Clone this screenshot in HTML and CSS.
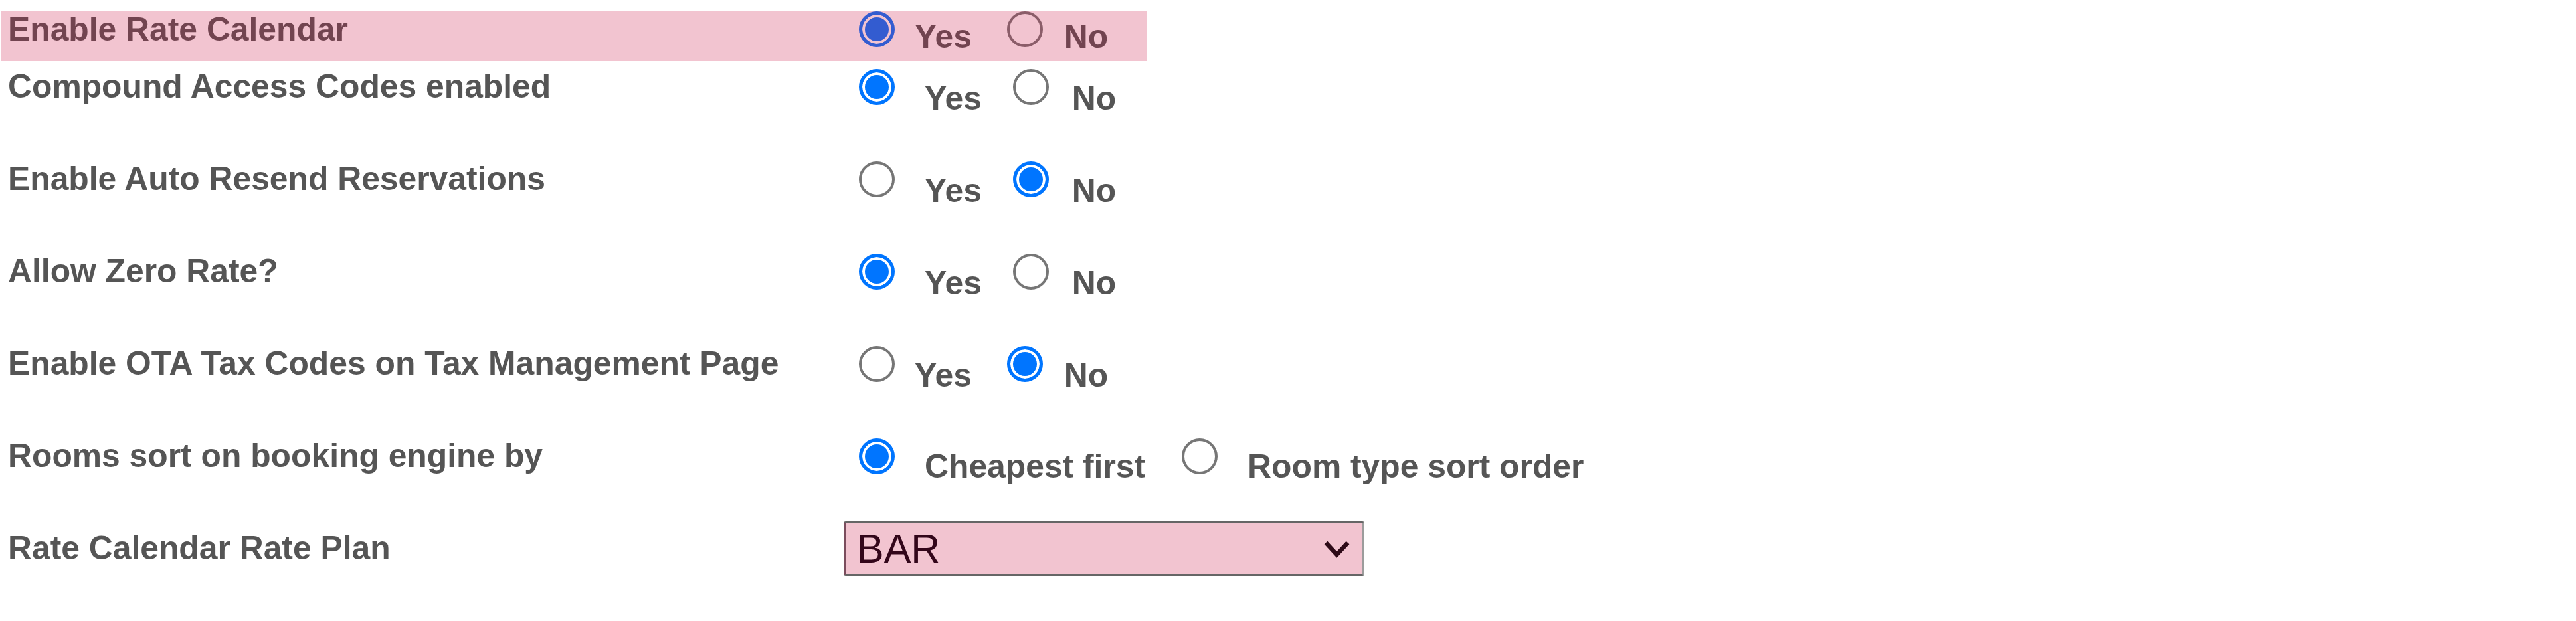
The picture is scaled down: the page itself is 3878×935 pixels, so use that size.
FILE: index.html
```html
<!DOCTYPE html>
<html lang="en">
<head>
<meta charset="utf-8">
<title>Settings</title>
<link rel="stylesheet" href="styles.css">
</head>
<body>
<div class="form">
  <div class="row row-first hl">
    <div class="label">Enable Rate Calendar</div>
    <div class="opts tight">
      <input type="radio" name="rc" class="radio" checked><span class="opt opt-a">Yes</span>
      <input type="radio" name="rc" class="radio radio-b"><span class="opt opt-b">No</span>
    </div>
  </div>
  <div class="row">
    <div class="label">Compound Access Codes enabled</div>
    <div class="opts">
      <input type="radio" name="cac" class="radio" checked><span class="opt opt-a">Yes</span>
      <input type="radio" name="cac" class="radio radio-b"><span class="opt opt-b">No</span>
    </div>
  </div>
  <div class="row">
    <div class="label">Enable Auto Resend Reservations</div>
    <div class="opts">
      <input type="radio" name="ars" class="radio"><span class="opt opt-a">Yes</span>
      <input type="radio" name="ars" class="radio radio-b" checked><span class="opt opt-b">No</span>
    </div>
  </div>
  <div class="row">
    <div class="label">Allow Zero Rate?</div>
    <div class="opts">
      <input type="radio" name="azr" class="radio" checked><span class="opt opt-a">Yes</span>
      <input type="radio" name="azr" class="radio radio-b"><span class="opt opt-b">No</span>
    </div>
  </div>
  <div class="row">
    <div class="label">Enable OTA Tax Codes on Tax Management Page</div>
    <div class="opts tight">
      <input type="radio" name="ota" class="radio"><span class="opt opt-a">Yes</span>
      <input type="radio" name="ota" class="radio radio-b" checked><span class="opt opt-b">No</span>
    </div>
  </div>
  <div class="row row-sort">
    <div class="label">Rooms sort on booking engine by</div>
    <div class="opts sort">
      <input type="radio" name="sort" class="radio" checked><span class="opt opt-a">Cheapest first</span>
      <input type="radio" name="sort" class="radio radio-b"><span class="opt opt-b">Room type sort order</span>
    </div>
  </div>
  <div class="row row-last">
    <div class="label">Rate Calendar Rate Plan</div>
    <div class="select-wrap">
      <select class="select">
        <option>BAR</option>
      </select>
      <svg class="chev" width="41" height="27" viewBox="0 0 41 27" aria-hidden="true">
        <polyline points="4,4 20.5,22 37,4" fill="none" stroke="#2e0a17" stroke-width="6.5" stroke-linejoin="miter"/>
      </svg>
    </div>
  </div>
</div>
</body>
</html>
```

FILE: styles.css
```css
html, body {
  margin: 0;
  padding: 0;
  background: #ffffff;
}

body {
  font-family: "Liberation Sans", Arial, sans-serif;
  font-weight: 700;
  font-size: 49.8px;
  line-height: 57px;
  color: #555555;
}

.form {
  padding: 16px 0 0 2px;
}

.row {
  display: flex;
  align-items: flex-start;
  height: 139px;
}

.row-first {
  position: relative;
  width: 1725px;
  height: 76px;
}

.row-sort {
  height: 137px;
}

.hl::after {
  content: "";
  position: absolute;
  inset: 0;
  background: rgba(203, 19, 67, 0.25);
  pointer-events: none;
}

.label {
  flex: none;
  box-sizing: border-box;
  width: 1268px;
  padding: 10px 0 0 10px;
  white-space: nowrap;
}

.row-first .label {
  padding-top: 0;
}

.row-last .label {
  padding-top: 12px;
}

.opts {
  display: flex;
  align-items: flex-start;
  white-space: nowrap;
}

.radio {
  -webkit-appearance: none;
  appearance: none;
  flex: none;
  box-sizing: border-box;
  width: 54px;
  height: 54px;
  margin: 12px 0 0 23px;
  border: 4px solid #767676;
  border-radius: 50%;
  background: #ffffff;
}

.radio:checked {
  border: 5px solid #0075ff;
  background: #0075ff;
  box-shadow: inset 0 0 0 4px #ffffff;
}

.opt {
  margin-top: 28px;
}

.opt-a { margin-left: 45px; }
.radio-b { margin-left: 47px; }
.opt-b { margin-left: 35px; }

.tight .opt-a { margin-left: 30px; }
.tight .radio-b { margin-left: 53px; }
.tight .opt-b { margin-left: 32px; }

.sort .opt { margin-top: 26px; }
.sort .opt-a { margin-left: 45px; }
.sort .radio-b { margin-left: 55px; }
.sort .opt-b { margin-left: 45px; }

.row-first .radio { margin-top: 1px; }
.row-first .opt { margin-top: 11px; }

.select-wrap {
  position: relative;
  flex: none;
}

.select {
  -webkit-appearance: none;
  appearance: none;
  display: block;
  box-sizing: border-box;
  width: 784px;
  height: 82px;
  margin: 0;
  padding: 0 60px 0 17px;
  border: 3px solid #666666;
  border-left-color: #7b4d5d;
  border-right-color: #9c9c9c;
  border-radius: 3px;
  background: #f2c4d0;
  color: #33061a;
  font-family: "Liberation Sans", Arial, sans-serif;
  font-weight: 400;
  font-size: 61px;
}

.chev {
  position: absolute;
  left: 722px;
  top: 28px;
  pointer-events: none;
}
```
